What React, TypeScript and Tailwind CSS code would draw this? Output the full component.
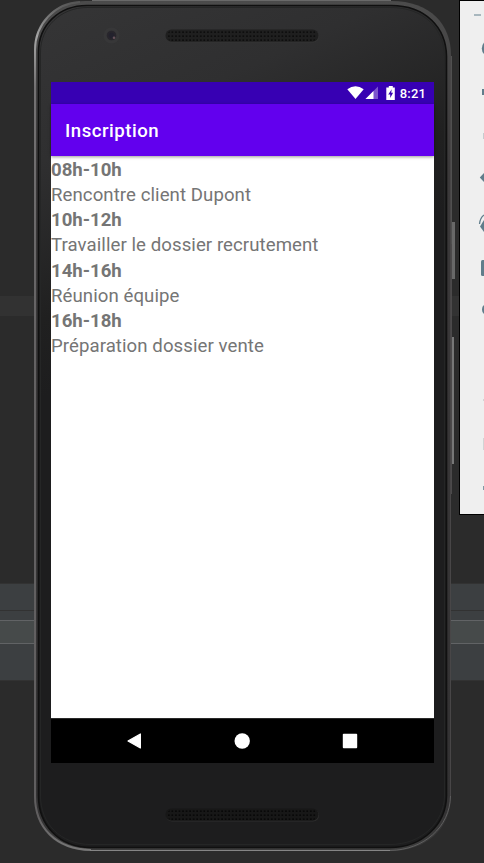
import React from "react";

const agenda = [
  { time: "08h-10h", label: "Rencontre client Dupont" },
  { time: "10h-12h", label: "Travailler le dossier recrutement" },
  { time: "14h-16h", label: "Réunion équipe" },
  { time: "16h-18h", label: "Préparation dossier vente" },
];

function Backdrop() {
  return (
    <div className="flex h-full flex-col bg-[#2b2b2b]">
      <div className="h-[296px]" />
      <div className="h-5 bg-[#323232]" />
      <div className="h-[267px]" />
      <div className="h-px bg-[#323232]" />
      <div className="h-[26px] bg-[#3c3f41]" />
      <div className="h-px bg-[#323232]" />
      <div className="h-[9px] bg-[#3c3f41]" />
      <div className="h-px bg-[#616365]" />
      <div className="h-[22px] bg-[#464a4a]" />
      <div className="h-px bg-[#616365]" />
      <div className="h-9 bg-[#3c3f41]" />
      <div className="h-px bg-[#323232]" />
      <div className="grow" />
    </div>
  );
}

function Speaker({ id, fill, dot, edge }: { id: string; fill: string; dot: string; edge: string }) {
  return (
    <svg width="155" height="14" viewBox="0 0 155 14">
      <defs>
        <pattern id={id} width="3.55" height="4" patternUnits="userSpaceOnUse" x="2" y="1">
          <rect x="1" y="1.2" width="1.7" height="1.7" rx="0.5" fill={dot} />
        </pattern>
      </defs>
      <rect x="1" y="1.2" width="153" height="12.3" rx="6" fill={edge} />
      <rect x="0.5" y="0.5" width="153" height="12.3" rx="6" fill={fill} />
      <rect x="3" y="1.3" width="148" height="11" rx="4" fill={`url(#${id})`} />
    </svg>
  );
}

function StatusBar() {
  return (
    <div className="flex h-[22px] shrink-0 items-center justify-end bg-[#3700b3] pr-2 text-[13px] font-medium tracking-[0.15px] text-white">
      <svg width="48" height="16" viewBox="0 0 48 16" className="mr-[5px]">
        <path d="M0.3 4.2 Q8.5 -1.5 16.7 4.2 L8.5 14 Z" fill="#fff" />
        <path d="M31 1.5 V14 H18.5 Z" fill="#7b55cd" />
        <path d="M26.5 6 V14 H18.5 Z" fill="#fff" />
        <path d="M41.8 1 h4 v1.5 h2 v12.5 h-8.5 v-12.5 h2.5 Z" fill="#fff" />
        <path d="M44.7 4.2 L41.2 9.4 H43.2 V13 L46.1 7.8 H44.2 Z" fill="#3700b3" />
      </svg>
      <span className="relative top-px">8:21</span>
    </div>
  );
}

function Screen() {
  return (
    <main className="flex h-[681px] w-[383px] flex-col bg-white">
      <StatusBar />
      <header className="z-10 flex h-[52px] shrink-0 items-center bg-[#6200ee] pl-[14px] pt-[3px] text-[18.62px] font-medium tracking-[0.5px] text-white shadow-[0_1px_3px_rgba(0,0,0,0.4)]">
        Inscription
      </header>
      <section className="grow pt-[2px] text-[18.62px] leading-[25.15px] tracking-[0.07px] text-[#757575]">
        {agenda.map((item) => (
          <div key={item.time}>
            <p className="font-bold tracking-[-0.02px]">{item.time}</p>
            <p>{item.label}</p>
          </div>
        ))}
      </section>
      <nav className="flex h-[45px] shrink-0 items-center justify-between border-t border-[#292929] bg-black px-[76px] pb-px">
        <svg width="15" height="16" viewBox="0 0 15 16">
          <path d="M13.4 1 V15 L1 8 Z" fill="#fff" stroke="#fff" strokeWidth="1.2" strokeLinejoin="round" />
        </svg>
        <svg width="16" height="16" viewBox="0 0 16 16">
          <circle cx="8.2" cy="8" r="7.7" fill="#fff" />
        </svg>
        <svg width="16" height="16" viewBox="0 0 16 16">
          <rect x="0.8" y="0.8" width="14.4" height="14.4" rx="0.9" fill="#fff" />
        </svg>
      </nav>
    </main>
  );
}

function PhoneShell() {
  return (
    <svg width="422" height="852" viewBox="33 0 422 852" className="absolute left-0 top-0">
      <defs>
        <linearGradient id="rim" x1="0" y1="0" x2="0" y2="1">
          <stop offset="0" stopColor="#4b4b4b" />
          <stop offset="0.2" stopColor="#3b393a" />
          <stop offset="0.95" stopColor="#333233" />
          <stop offset="1" stopColor="#3c3c3c" />
        </linearGradient>
        <linearGradient id="left-rim" x1="0" y1="0" x2="0" y2="1">
          <stop offset="0" stopColor="#555" />
          <stop offset="0.04" stopColor="#a5a5a5" />
          <stop offset="0.1" stopColor="#747273" />
          <stop offset="0.4" stopColor="#646263" />
          <stop offset="0.96" stopColor="#605e5f" />
          <stop offset="1" stopColor="#777" />
        </linearGradient>
        <linearGradient id="face" gradientUnits="userSpaceOnUse" x1="40" y1="5" x2="190" y2="330">
          <stop offset="0" stopColor="#353536" />
          <stop offset="0.4" stopColor="#2f2f30" />
          <stop offset="0.8" stopColor="#202020" />
          <stop offset="1" stopColor="#1d1d1e" />
        </linearGradient>
      </defs>
      <path d="M92 .5H391" stroke="#696969" />
      <path d="M451.5 56V244" stroke="#505050" />
      <path d="M453.5 222V279" stroke="#686868" strokeWidth="3" />
      <path d="M453 337V464" stroke="#777" strokeWidth="2" />
      <path d="M451.5 244V494" stroke="#4c4a4b" />
      <path d="M86 1H391C431 1 451 25 451 55V796C451 829 426 851 390 851H91C54 851 34 827 34 796V50C34 20 57 1 86 1Z" fill="url(#rim)" />
      <path d="M80 2C55 3 35 24 35 50V796C35 827 55 849 91 850" fill="none" stroke="url(#left-rim)" strokeWidth="2" />
      <path d="M90 850.5H390" fill="none" stroke="#858585" />
      <path d="M390 850.5C424 850 450 827 450.5 796" fill="none" stroke="#686868" strokeWidth=".8" />
      <path d="M450.5 56V796" stroke="#484647" />
      <path d="M87 5.5H391C426 5.5 446 28 446.5 56V796C446 824 423 847.5 390 847.5H91C58 847.5 38.5 824 38.5 796V52C38.5 25 59 5.5 87 5.5Z" fill="url(#face)" stroke="#101010" strokeWidth="1.6" />
      <path d="M87 7.5H391C424 7.5 444 29 444.5 56V796C444 822 422 844.5 390 844.5H91C60 844.5 40.5 823 40.5 796V52C40.5 27 61 7.5 87 7.5Z" fill="none" stroke="#252626" />
    </svg>
  );
}

function Phone() {
  return (
    <div className="absolute left-[33px] top-0 h-[852px] w-[422px]">
      <PhoneShell />
      <div className="relative flex h-full flex-col pl-[18px]">
        <div className="flex h-[82px] items-start pl-[52px] pt-[27px]">
          <svg width="17" height="17" viewBox="0 0 17 17">
            <circle cx="8.5" cy="8.5" r="8" fill="#373738" />
            <circle cx="8.5" cy="8.5" r="4.8" fill="#28262c" />
            <circle cx="8.5" cy="8.5" r="2.8" fill="#23222d" />
            <circle cx="11" cy="10.8" r="1.3" fill="#66525a" />
          </svg>
          <div className="ml-[45px] pt-[2px]">
            <Speaker id="top-mesh" fill="#1f1f1f" dot="#0c0c0c" edge="#353535" />
          </div>
        </div>
        <Screen />
        <div className="pl-[114px] pt-[45px]">
          <Speaker id="bottom-mesh" fill="#171717" dot="#070707" edge="#2e2e2e" />
        </div>
      </div>
    </div>
  );
}

function EmulatorToolbar() {
  return (
    <aside className="absolute left-[459px] top-0 h-[515px] w-[25px] border-y border-l border-black bg-[#efefef]">
      <svg width="24" height="513" viewBox="460 1 24 513">
        <g fill="#607d8b">
          <rect x="474" y="14" width="7" height="2" fill="#a8b7be" />
          <path d="M484 42.5Q481.8 45 481.8 48.5T484 54Z" />
          <rect x="482" y="89" width="3" height="6" />
          <rect x="483" y="133" width="1" height="6" fill="#c5cccf" />
          <path d="M484 173L479.8 177.5L484 182Z" />
          <path d="M484 220L480 226.5L484 232Z" />
          <path d="M484 215Q480 218 479.5 224" fill="none" stroke="#607d8b" strokeWidth="1.3" />
          <rect x="481" y="260" width="5" height="16" rx="1.5" />
          <path d="M484 305Q482 306 482 309.5T484 314Z" />
          <rect x="483" y="399" width="1" height="2" fill="#d2d4d5" />
          <rect x="483" y="438" width="1" height="12" fill="#d2d4d5" />
          <rect x="483" y="486" width="1" height="4" fill="#8099a4" />
        </g>
      </svg>
    </aside>
  );
}

export default function App() {
  return (
    <div className="relative h-[863px] w-[484px] overflow-hidden font-['Roboto',sans-serif]">
      <Backdrop />
      <Phone />
      <EmulatorToolbar />
    </div>
  );
}
